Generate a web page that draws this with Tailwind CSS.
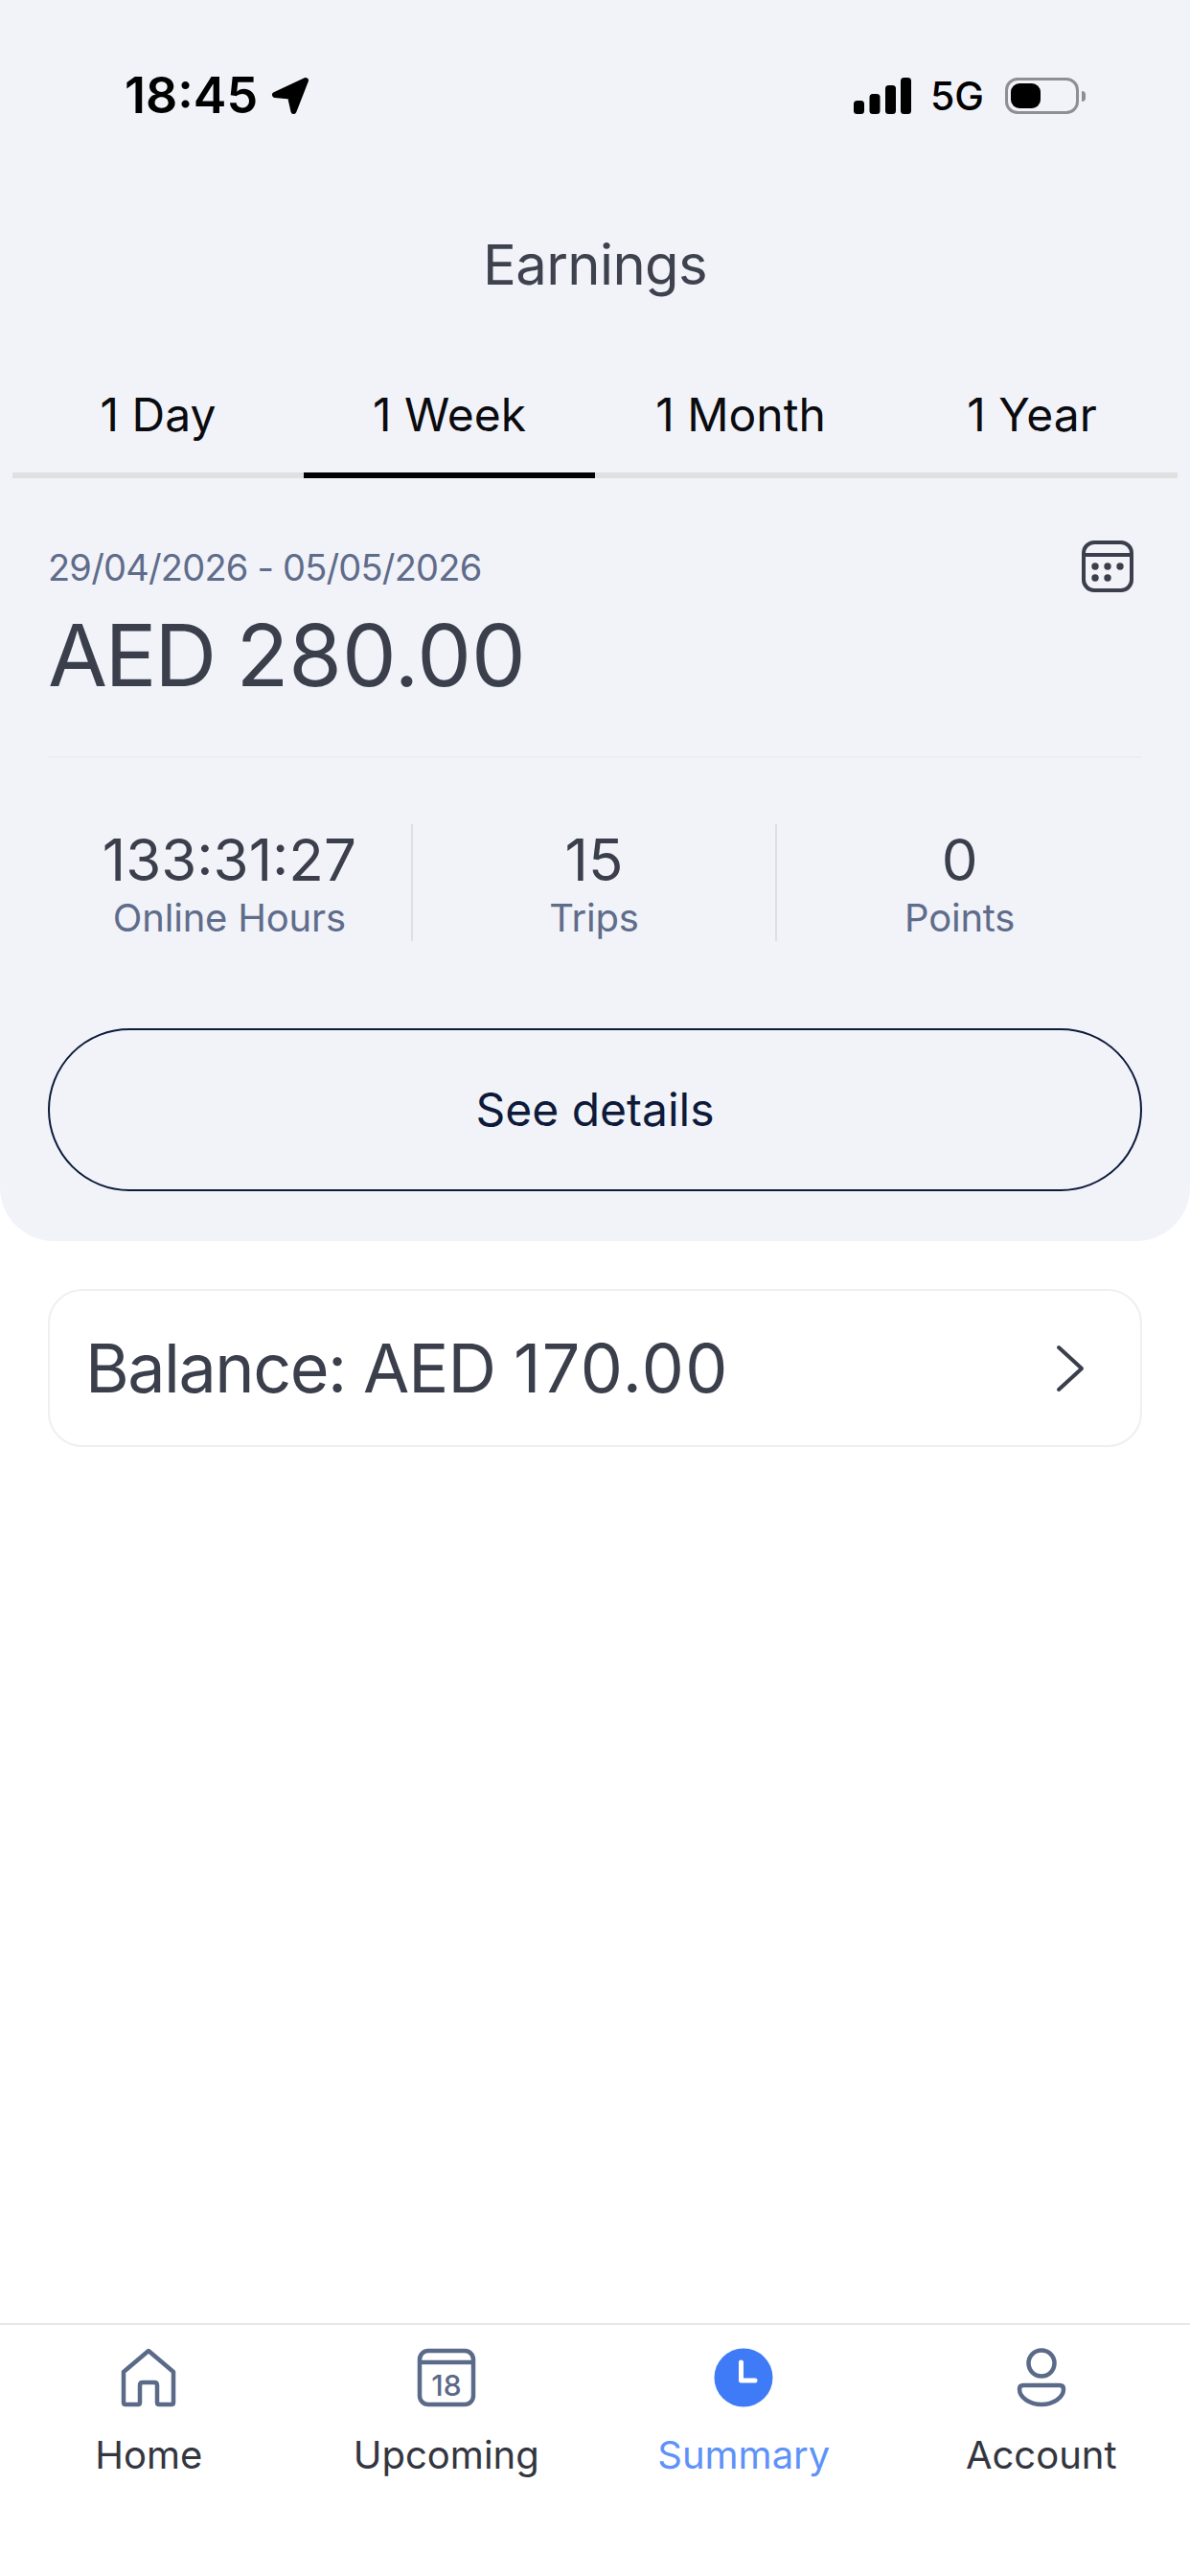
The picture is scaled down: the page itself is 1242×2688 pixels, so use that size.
<!DOCTYPE html>
<html lang="en">
<head>
<meta charset="utf-8"/>
<title>Earnings</title>
<script src="https://cdn.jsdelivr.net/npm/@tailwindcss/browser@4"></script>
</head>
<body class="bg-white font-['Inter',sans-serif]">
<div class="flex flex-col w-[1242px] h-[2688px] bg-white">

  <!-- Header block -->
  <div class="bg-[#f1f3f9] rounded-b-[56px] h-[1295px] shrink-0">
    <!-- Status bar -->
    <div class="flex items-center justify-between h-[120px] pt-[80px] pl-[130px] pr-[109px]">
      <div class="flex items-center gap-[14px]">
        <span class="text-[52px] leading-[40px] font-semibold text-black">18:45</span>
        <svg width="40" height="40" viewBox="0 0 40 40"><path d="M36 4 4 19 20 20.500 23.500 36Z" fill="#000" stroke="#000" stroke-width="6" stroke-linejoin="round"/></svg>
      </div>
      <div class="flex items-center">
        <svg width="60" height="38" viewBox="0 0 60 38" fill="#000"><rect x="0" y="24" width="11" height="14" rx="3.5"/><rect x="16.500" y="17" width="11" height="21" rx="3.5"/><rect x="33" y="8" width="11" height="30" rx="3.5"/><rect x="49" y="0" width="11" height="38" rx="3.5"/></svg>
        <span class="text-[41px] leading-[40px] font-medium text-black ml-[20px]">5G</span>
        <div class="ml-[22px] w-[77px] h-[38px] rounded-[13px] border-[3px] border-[#8e8e93] p-[3px]">
          <div class="w-[31px] h-full rounded-[9px] bg-black"></div>
        </div>
        <div class="ml-[3px] w-[4px] h-[11px] rounded-r-full bg-[#8e8e93]"></div>
      </div>
    </div>

    <!-- Title -->
    <div class="flex justify-center items-center h-[70px] mt-[121px] text-[58px] tracking-[-0.6px] text-[#3e424e]">Earnings</div>

    <!-- Tabs -->
    <div class="mx-[13px] mt-[79px] grid grid-cols-4 text-[48px] text-[#0b0b0f]">
      <div class="flex items-center justify-center h-[109px] pb-[17px] border-b-[6px] border-[#e0e0e0]">1 Day</div>
      <div class="flex items-center justify-center h-[109px] pb-[17px] border-b-[6px] border-black">1 Week</div>
      <div class="flex items-center justify-center h-[109px] pb-[17px] border-b-[6px] border-[#e0e0e0]">1 Month</div>
      <div class="flex items-center justify-center h-[109px] pb-[17px] border-b-[6px] border-[#e0e0e0]">1 Year</div>
    </div>

    <!-- Period total -->
    <div class="mx-[50px] mt-[70px] flex justify-between">
      <div>
        <div class="text-[38px] leading-[46px] tracking-[-0.8px] text-[#5f6c8a]">29/04/2026 - 05/05/2026</div>
        <div class="text-[90px] leading-[100px] mt-[19px] text-[#3a3f4b]"><span class="tracking-[-2.5px]">AED </span>280.00</div>
      </div>
      <svg class="-mt-[5px] mr-[9px]" width="54" height="54" viewBox="0 0 54 54" fill="none" stroke="#3a3f4b" stroke-width="4"><rect x="2" y="2" width="50" height="50" rx="11"/><path d="M2 15H52"/><g fill="#3a3f4b" stroke="none"><circle cx="14" cy="27" r="3.700"/><circle cx="27" cy="27" r="3.700"/><circle cx="40" cy="27" r="3.700"/><circle cx="14" cy="39" r="3.700"/><circle cx="27" cy="39" r="3.700"/></g></svg>
    </div>
    <div class="mx-[50px] mt-[55px] h-[2px] bg-[#eceded]"></div>

    <!-- Stats -->
    <div class="mx-[50px] mt-[69px] grid grid-cols-3 h-[121px] text-center">
      <div class="flex flex-col items-center pt-[2px] border-r-[2px] border-[#dddfe3]">
        <span class="text-[60px] leading-[70px] text-[#3a3f4b]">133:31:27</span>
        <span class="text-[40px] leading-[48px] mt-[2px] tracking-[-0.2px] text-[#5f6c8a]">Online Hours</span>
      </div>
      <div class="flex flex-col items-center pt-[2px] border-r-[2px] border-[#dddfe3]">
        <span class="text-[60px] leading-[70px] text-[#3a3f4b]">15</span>
        <span class="text-[40px] leading-[48px] mt-[2px] tracking-[-0.2px] text-[#5f6c8a]">Trips</span>
      </div>
      <div class="flex flex-col items-center pt-[2px]">
        <span class="text-[60px] leading-[70px] text-[#3a3f4b]">0</span>
        <span class="text-[40px] leading-[48px] mt-[2px] tracking-[-0.2px] text-[#5f6c8a]">Points</span>
      </div>
    </div>

    <!-- See details -->
    <div class="mx-[50px] mt-[92px] h-[170px] rounded-full border-[2px] border-[#0d1a3a] flex items-center justify-center text-[48px] text-[#0d1a3a]">See details</div>
  </div>

  <!-- Balance -->
  <div class="mx-[50px] mt-[50px] h-[165px] rounded-[36px] border-[2px] border-[#eeeff1] flex items-center justify-between pl-[37px] pr-[57px]">
    <span class="text-[70px] text-[#3a3f4b]"><span class="tracking-[-1.5px]">Balance: </span><span class="tracking-[-0.9px]">AED </span><span class="tracking-[1.5px]">170.00</span></span>
    <svg width="32" height="50" viewBox="0 0 32 50" fill="none" stroke="#3a3f4b" stroke-width="4" stroke-linecap="round" stroke-linejoin="round"><path d="M4 3 28 25 4 47"/></svg>
  </div>

  <div class="flex-1"></div>

  <!-- Bottom nav -->
  <div class="h-[264px] shrink-0 border-t-[2px] border-[#e8e8e8] grid grid-cols-4 pt-[24px]">
    <div class="flex flex-col items-center">
      <svg width="60" height="62" viewBox="0 0 60 62" fill="none" stroke="#5a6a88" stroke-width="4.500" stroke-linejoin="round"><path d="M30 3 4 25V57Q4 59 6 59H19Q21 59 21 57V39Q21 36 24 36H36Q39 36 39 39V57Q39 59 41 59H54Q56 59 56 57V25Z"/></svg>
      <span class="text-[40px] leading-[52px] mt-[24px] text-[#33363f]">Home</span>
    </div>
    <div class="flex flex-col items-center">
      <svg width="62" height="62" viewBox="0 0 62 62" fill="none" stroke="#5a6a88" stroke-width="4.500"><rect x="3" y="3" width="56" height="56" rx="9"/><path d="M3 15H59"/><text x="31" y="50" text-anchor="middle" font-family="Inter, sans-serif" font-size="30" font-weight="500" fill="#5a6a88" stroke="none">18</text></svg>
      <span class="text-[40px] leading-[52px] mt-[24px] text-[#33363f]">Upcoming</span>
    </div>
    <div class="flex flex-col items-center">
      <svg width="62" height="62" viewBox="0 0 62 62"><circle cx="31" cy="31" r="30.500" fill="#3f7bf6"/><path d="M28.500 15V34H43" fill="none" stroke="#fff" stroke-width="5" stroke-linecap="round" stroke-linejoin="round"/></svg>
      <span class="text-[40px] leading-[52px] mt-[24px] text-[#5e92f8]">Summary</span>
    </div>
    <div class="flex flex-col items-center">
      <svg width="52" height="62" viewBox="0 0 52 62" fill="none" stroke="#5a6a88" stroke-width="4.500"><circle cx="26" cy="16" r="13.500"/><path d="M7 39H45Q49 39 49 43C49 52 38 59 26 59S3 52 3 43Q3 39 7 39Z"/></svg>
      <span class="text-[40px] leading-[52px] mt-[24px] text-[#33363f]">Account</span>
    </div>
  </div>
</div>
</body>
</html>
